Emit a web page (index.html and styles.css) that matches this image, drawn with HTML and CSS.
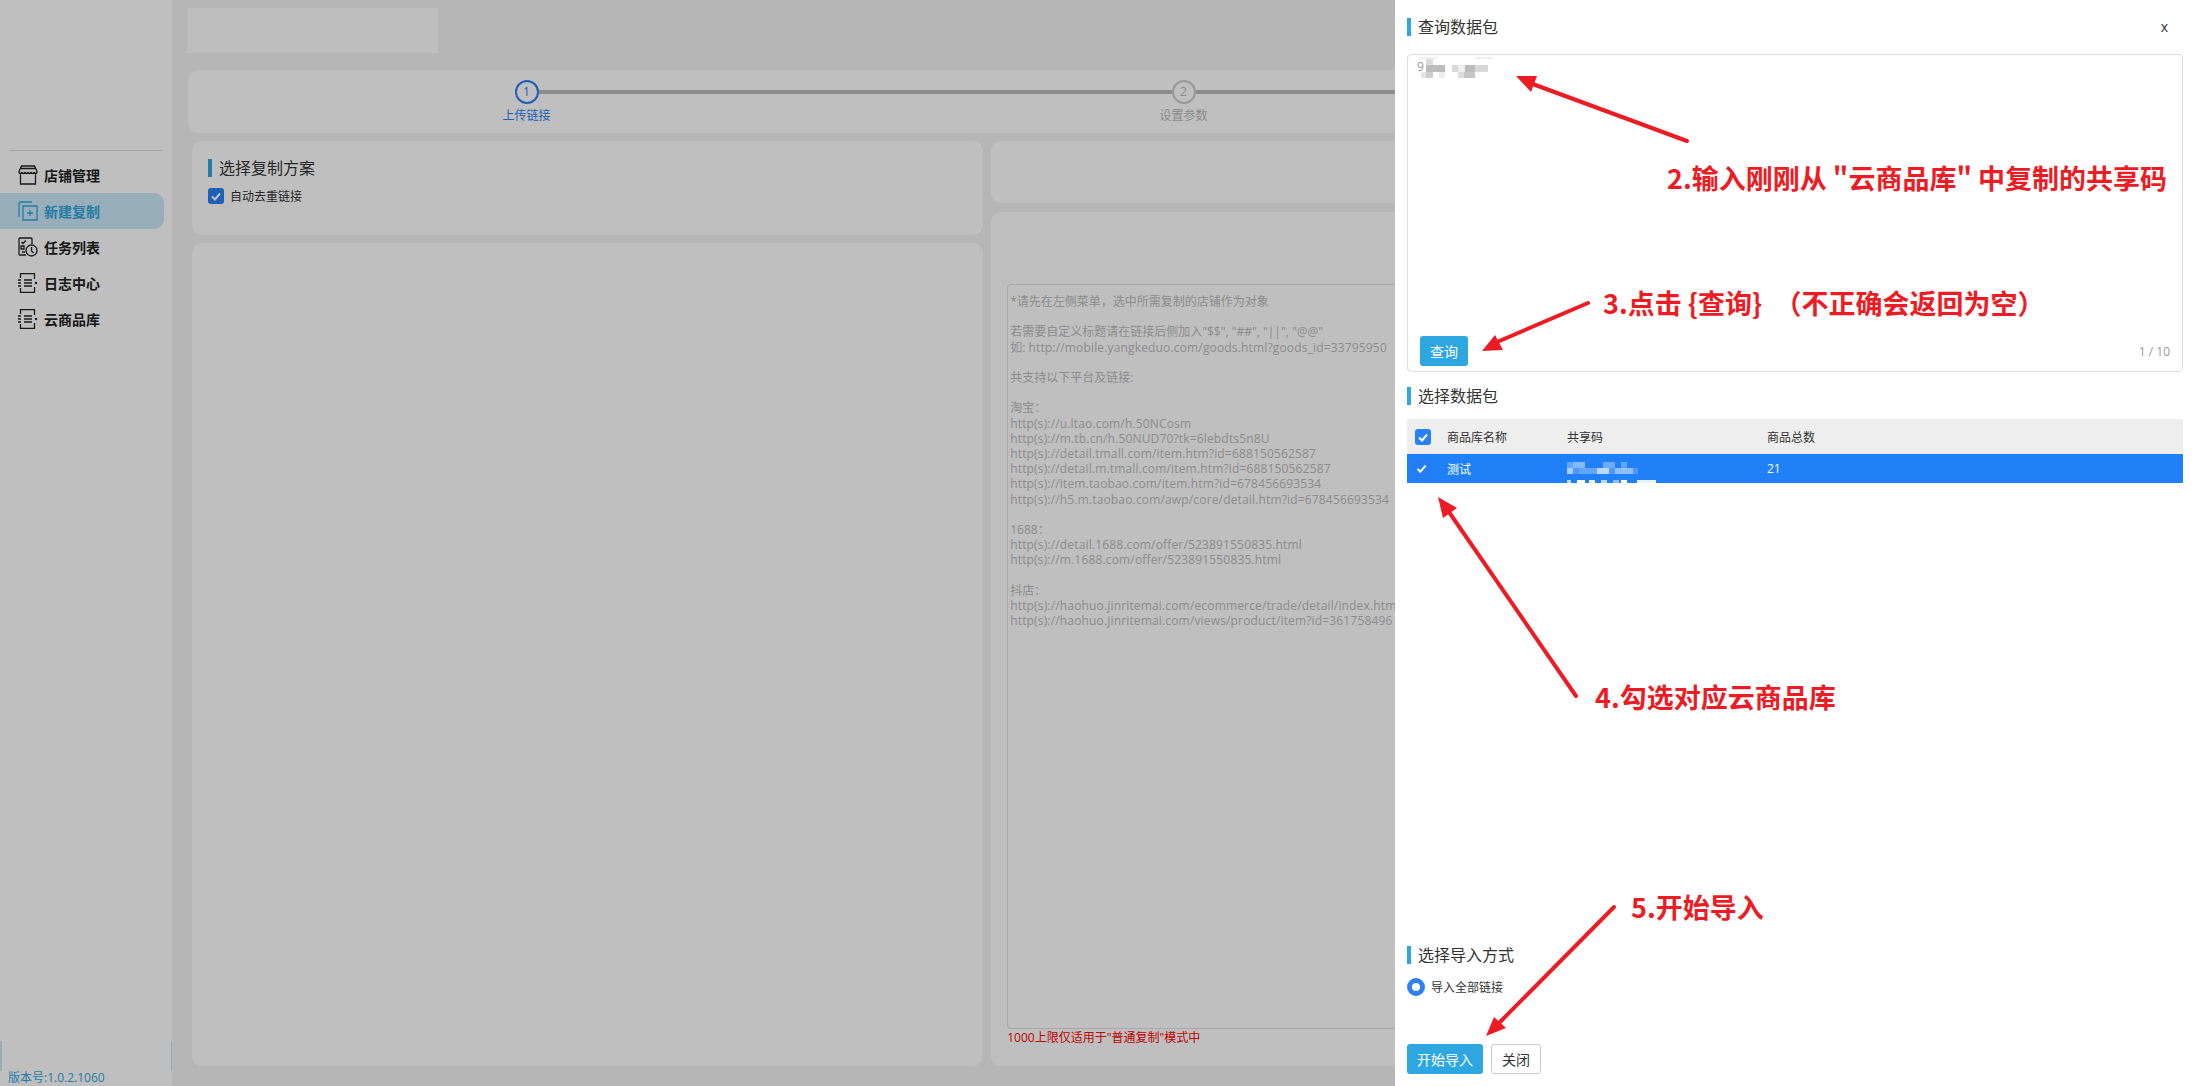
FILE: index.html
```html
<!DOCTYPE html>
<html lang="zh-CN">
<head>
  <meta charset="UTF-8" />
  <meta name="viewport" content="width=device-width, initial-scale=1" />
  <title>新建复制</title>
  <link rel="stylesheet" href="styles.css">
</head>
<body>

  <div class="app">
    <aside class="sidebar">
      <nav class="menu">
        <a class="menu-item">
          <svg class="menu-icon" viewBox="0 0 20 20"><path d="M3.500 1h13l2.500 5.500v1q-1.500 2-3 0-1.500 2-3 0-1.500 2-3 0-1.500 2-3 0-1.500 2-3 0-1.500 2-3 0v-1zM3 3.500h14M2.500 9.500v9.500h15V9.500"/></svg>
          店铺管理
        </a>
        <a class="menu-item active">
          <svg class="menu-icon" viewBox="0 0 20 20"><path d="M1 16V3q0-2 2-2h11M5 5h14v14H5zM12 9v6M9 12h6"/></svg>
          新建复制
        </a>
        <a class="menu-item">
          <svg class="menu-icon" viewBox="0 0 20 20"><path d="M8 18H2q-1 0-1-1V2q0-1 1-1h11q1 0 1 1v5M3.500 5l1.500 1.500L8 3.500M3 9h3v3H3zM4 15h3"/><circle cx="13.500" cy="13.500" r="5.500"/><path d="M13.500 10v4l2 2"/></svg>
          任务列表
        </a>
        <a class="menu-item">
          <svg class="menu-icon" viewBox="0 0 20 20"><path d="M2.500 5V.7h14V6M2.500 15v4.300h14V14M0 7h3M0 10h3M0 13h3M6 7h8M6 10h8M6 13h8"/><circle class="dot" cx="18" cy="10" r="1.200"/></svg>
          日志中心
        </a>
        <a class="menu-item">
          <svg class="menu-icon" viewBox="0 0 20 20"><path d="M2.500 5V.7h14V6M2.500 15v4.300h14V14M0 7h3M0 10h3M0 13h3M6 7h8M6 10h8M6 13h8"/><circle class="dot" cx="18" cy="10" r="1.200"/></svg>
          云商品库
        </a>
      </nav>
      <div class="version">版本号:1.0.2.1060</div>
    </aside>

    <main class="content">
      <div class="shop-box"></div>

      <div class="steps">
        <div class="step current">
          <span class="step-num">1</span>
          <span class="step-label">上传链接</span>
        </div>
        <div class="step">
          <span class="step-num">2</span>
          <span class="step-label">设置参数</span>
        </div>
        <div class="step last"></div>
      </div>

      <div class="columns">
        <div class="col">
          <section class="card plan-card">
            <h3 class="section-title">选择复制方案</h3>
            <label class="check-row">
              <span class="check dark">
                <svg viewBox="0 0 16 16"><path d="M4 8.500l3 3 5-6"/></svg>
              </span>
              自动去重链接
            </label>
          </section>
          <section class="card grow"></section>
        </div>
        <div class="col wide">
          <section class="card blank-card"></section>
          <section class="card grow link-card">
            <div class="link-input">*请先在左侧菜单，选中所需复制的店铺作为对象

若需要自定义标题请在链接后侧加入"$$", "##", "||", "@@"
如: <span class="url">http://mobile.yangkeduo.com/goods.html?goods_id=33795950</span>

共支持以下平台及链接:

淘宝：
<span class="url">http(s)://u.ltao.com/h.50NCosm
http(s)://m.tb.cn/h.50NUD70?tk=6lebdts5n8U
http(s)://detail.tmall.com/item.htm?id=688150562587
http(s)://detail.m.tmall.com/item.htm?id=688150562587
http(s)://item.taobao.com/item.htm?id=678456693534
http(s)://h5.m.taobao.com/awp/core/detail.htm?id=678456693534</span>

1688：
<span class="url">http(s)://detail.1688.com/offer/523891550835.html
http(s)://m.1688.com/offer/523891550835.html</span>

抖店：
<span class="url">http(s)://haohuo.jinritemai.com/ecommerce/trade/detail/index.htm
http(s)://haohuo.jinritemai.com/views/product/item?id=361758496</span></div>
            <div class="limit-note">1000上限仅适用于"普通复制"模式中</div>
          </section>
        </div>
      </div>
    </main>
  </div>

  <div class="mask"></div>

  <aside class="drawer">
    <div class="drawer-head">
      <h3 class="section-title">查询数据包</h3>
      <span class="drawer-close">x</span>
    </div>

    <div class="code-box">
      <div class="code-text">
        <span class="code-first">9</span>
        <svg class="code-blur" width="80" height="24" viewBox="0 0 80 24">
          <rect x="4" y="0" width="17" height="2" fill="#f0f0f0"/>
          <rect x="58" y="0" width="18" height="2" fill="#f0f0f0"/>
          <rect x="9" y="2" width="7" height="6" fill="#dcdcdc"/>
          <rect x="9" y="8" width="19" height="7" fill="#bcbcbc"/>
          <rect x="35" y="8" width="6" height="7" fill="#d8d8d8"/>
          <rect x="41" y="8" width="7" height="7" fill="#eeeeee"/>
          <rect x="48" y="8" width="10" height="7" fill="#bcbcbc"/>
          <rect x="58" y="8" width="13" height="7" fill="#d8d8d8"/>
          <rect x="4" y="15" width="5" height="6" fill="#e6e6e6"/>
          <rect x="9" y="15" width="7" height="6" fill="#cecece"/>
          <rect x="22" y="15" width="6" height="6" fill="#eeeeee"/>
          <rect x="41" y="15" width="6" height="6" fill="#dcdcdc"/>
          <rect x="47" y="15" width="11" height="6" fill="#c6c6c6"/>
        </svg>
      </div>
      <div class="code-foot">
        <button class="btn primary query-btn">查询</button>
        <span class="counter">1 / 10</span>
      </div>
    </div>

    <h3 class="section-title pack-title">选择数据包</h3>
    <table class="pack-table">
      <thead>
        <tr>
          <th class="cell-check">
            <span class="check head">
              <svg viewBox="0 0 16 16"><path d="M4 8.500l3 3 5-6"/></svg>
            </span>
          </th>
          <th class="cell-name">商品库名称</th>
          <th class="cell-code">共享码</th>
          <th>商品总数</th>
        </tr>
      </thead>
      <tbody>
        <tr class="selected">
          <td class="cell-check">
            <span class="check row">
              <svg viewBox="0 0 16 16"><path d="M3 8.500l3.500 3.500 6.500-7.500"/></svg>
            </span>
          </td>
          <td class="cell-name">测试</td>
          <td class="cell-code">
            <svg class="share-blur" width="90" height="21" viewBox="0 0 90 21">
              <g fill="#fff">
                <rect x="0" y="0" width="6" height="6" opacity=".3"/>
                <rect x="6" y="0" width="12" height="6" opacity=".45"/>
                <rect x="36" y="0" width="12" height="6" opacity=".35"/>
                <rect x="54" y="0" width="6" height="6" opacity=".3"/>
                <rect x="0" y="6" width="6" height="6" opacity=".6"/>
                <rect x="6" y="6" width="6" height="6" opacity=".2"/>
                <rect x="12" y="6" width="18" height="6" opacity=".3"/>
                <rect x="30" y="6" width="12" height="6" opacity=".7"/>
                <rect x="42" y="6" width="6" height="6" opacity=".2"/>
                <rect x="48" y="6" width="18" height="6" opacity=".5"/>
                <rect x="66" y="6" width="5" height="6" opacity=".2"/>
                <rect x="0" y="18" width="4" height="3" opacity=".7"/>
                <rect x="10" y="18" width="8" height="3"/>
                <rect x="22" y="18" width="6" height="3" opacity=".9"/>
                <rect x="34" y="18" width="6" height="3" opacity=".7"/>
                <rect x="46" y="18" width="6" height="3" opacity=".5"/>
                <rect x="54" y="18" width="6" height="3"/>
                <rect x="70" y="18" width="19" height="3" opacity=".9"/>
              </g>
            </svg>
          </td>
          <td>21</td>
        </tr>
      </tbody>
    </table>

    <div class="import-way">
      <h3 class="section-title">选择导入方式</h3>
      <label class="radio-row">
        <span class="radio"></span>
        导入全部链接
      </label>
    </div>

    <div class="drawer-foot">
      <button class="btn primary start-btn">开始导入</button>
      <button class="btn close-btn">关闭</button>
    </div>
  </aside>

  <!-- annotations drawn on top of the screenshot -->
  <svg class="arrows" width="2195" height="1086" viewBox="0 0 2195 1086">
    <g stroke="#ed1c24" stroke-width="4" stroke-linecap="round" fill="none">
      <path d="M1530 83L1687 141"/>
      <path d="M1497 342L1588 303"/>
      <path d="M1449 512L1576 696"/>
      <path d="M1500 1022L1614 907"/>
    </g>
    <g fill="#ed1c24">
      <path d="M1516 76L1537 76L1531 92z"/>
      <path d="M1482 351L1495 335L1503 350z"/>
      <path d="M1438 497L1457 508L1443 518z"/>
      <path d="M1486 1036L1494 1017L1506 1028z"/>
    </g>
  </svg>
  <div class="note note-2">2.输入刚刚从 "云商品库" 中复制的共享码</div>
  <div class="note note-3">3.点击 {查询}  （不正确会返回为空）</div>
  <div class="note note-4">4.勾选对应云商品库</div>
  <div class="note note-5">5.开始导入</div>

</body>
</html>
```

FILE: styles.css
```css
* {
  box-sizing: border-box;
}

html, body {
  margin: 0;
  height: 100%;
  overflow: hidden;
}

body {
  font-family: "Open Sans", "Noto Sans CJK SC", sans-serif;
  font-size: 12px;
  color: #333;
  background: #f3f3f5;
}

h3 {
  margin: 0;
  font-weight: normal;
}

.app {
  display: flex;
  height: 100vh;
}

/* sidebar */
.sidebar {
  position: relative;
  width: 172px;
  flex: none;
  display: flex;
  flex-direction: column;
  background: #fff;
  padding-top: 150px;
}

/* collapse handle, only its two edges show */
.sidebar::before,
.sidebar::after {
  content: "";
  position: absolute;
  top: 1041px;
  height: 30px;
  background: #cfe6f2;
}

.sidebar::before {
  left: 0;
  width: 2px;
}

.sidebar::after {
  right: 0;
  width: 1px;
}

.menu::before {
  content: "";
  display: block;
  height: 1px;
  margin: 0 10px 6px;
  background: #ddd;
}

.menu-item {
  display: flex;
  align-items: center;
  gap: 6px;
  width: 164px;
  height: 36px;
  padding-left: 18px;
  font-size: 14px;
  font-weight: bold;
  color: #222;
  border-radius: 0 10px 10px 0;
}

.menu-item.active {
  background: #cbe9f7;
  color: #2ea7e0;
}

.menu-icon {
  width: 20px;
  height: 20px;
  flex: none;
  fill: none;
  stroke: currentColor;
  stroke-width: 1.300;
}

.menu-icon .dot {
  fill: currentColor;
  stroke: none;
}

.version {
  margin-top: auto;
  padding: 0 0 0 8px;
  height: 16px;
  line-height: 16px;
  color: #2ea7e0;
}

/* main */
.content {
  flex: 1;
  min-width: 0;
  display: flex;
  flex-direction: column;
  padding: 8px 16px 20px;
}

.shop-box {
  width: 251px;
  height: 45px;
  margin-left: -1px;
  background: #fff;
  opacity: .9;
}

.steps {
  display: flex;
  height: 63px;
  margin-top: 17px;
  padding: 10px 10px 0;
  background: #fff;
  border-radius: 10px;
}

.step {
  position: relative;
  flex: 1;
  display: flex;
  flex-direction: column;
  align-items: center;
  color: #bbb;
}

.step::after {
  content: "";
  position: absolute;
  top: 10px;
  left: calc(50% + 12px);
  width: calc(100% - 24px);
  height: 4px;
  background: #bbb;
}

.step.last::after {
  display: none;
}

.step-num {
  width: 24px;
  height: 24px;
  line-height: 20px;
  text-align: center;
  border: 2px solid #ccc;
  border-radius: 50%;
}

.step-label {
  margin-top: 3px;
  line-height: 18px;
}

.step.current {
  color: #2a80f5;
}

.step.current .step-num {
  border-color: #2a80f5;
}

.columns {
  flex: 1;
  min-height: 0;
  display: grid;
  grid-template-columns: 1fr 1.5fr;
  gap: 8px;
  margin: 8px 1px 0 4px;
}

.col {
  display: flex;
  flex-direction: column;
  gap: 8px;
  min-width: 0;
}

.col.wide {
  gap: 9px;
}

.card {
  background: #fff;
  border-radius: 10px;
}

.grow {
  flex: 1;
  min-height: 0;
}

.plan-card {
  height: 94px;
  padding: 18px 16px;
}

.blank-card {
  height: 62px;
}

.section-title {
  height: 18px;
  line-height: 18px;
  padding-left: 7px;
  border-left: 4px solid #2ea7e0;
  font-size: 16px;
  color: #333;
}

.check-row {
  display: flex;
  align-items: center;
  gap: 6px;
  margin-top: 10px;
}

.check {
  display: block;
  width: 16px;
  height: 16px;
  flex: none;
  border-radius: 3px;
  background: #2a80f5;
}

.check svg {
  display: block;
  width: 100%;
  height: 100%;
  fill: none;
  stroke: #fff;
  stroke-width: 2;
}

.link-card {
  display: flex;
  flex-direction: column;
  padding: 72px 16px 19px;
}

.link-input {
  flex: 1;
  min-height: 0;
  padding: 9px 2px;
  border: 1px solid #e0e0e0;
  border-radius: 4px;
  line-height: 15.200px;
  color: #bbb;
  white-space: pre;
  overflow: hidden;
}

.url {
  letter-spacing: .16px;
}

.limit-note {
  height: 18px;
  line-height: 18px;
  color: #f00;
}

/* drawer and mask */
.mask {
  position: fixed;
  inset: 0;
  background: rgba(0, 0, 0, .25);
}

.drawer {
  position: fixed;
  top: 0;
  right: 0;
  bottom: 0;
  width: 800px;
  display: flex;
  flex-direction: column;
  padding: 18px 12px 12px;
  background: #fff;
}

.drawer-head {
  display: flex;
  justify-content: space-between;
  padding-right: 15px;
}

.drawer-close {
  line-height: 18px;
  font-size: 14px;
  color: #333;
}

.code-box {
  height: 318px;
  margin-top: 18px;
  display: flex;
  flex-direction: column;
  border: 1px solid #ddd;
  border-radius: 4px;
}

.code-text {
  position: relative;
  height: 24px;
  margin: 2px 0 0 9px;
  color: #999;
}

.code-first {
  position: absolute;
  top: 2px;
  left: 0;
  line-height: 16px;
}

.code-blur {
  position: absolute;
  top: 0;
  left: 0;
}

.code-foot {
  margin-top: auto;
  display: flex;
  align-items: center;
  justify-content: space-between;
  padding: 0 12px 5px;
}

.counter {
  color: #999;
}

.btn {
  height: 30px;
  padding: 0;
  font: inherit;
  font-size: 14px;
  border-radius: 3px;
  border: 1px solid #ccc;
  background: #fff;
  color: #333;
}

.btn.primary {
  border: none;
  background: #2ea7e0;
  color: #fff;
}

.query-btn {
  width: 48px;
}

.pack-title {
  margin-top: 15px;
}

.pack-table {
  width: 100%;
  margin-top: 14px;
  border-collapse: collapse;
  table-layout: fixed;
}

.pack-table th {
  height: 35px;
  padding: 0;
  background: #eee;
  font-weight: normal;
  text-align: left;
  color: #333;
}

.pack-table td {
  height: 29px;
  padding: 0;
}

.selected td {
  background: #2080f7;
  color: #fff;
}

.cell-check {
  width: 40px;
}

.cell-name {
  width: 120px;
}

.cell-code {
  width: 200px;
}

.check.head {
  margin-left: 8px;
}

.check.row {
  width: 15px;
  height: 15px;
  margin-left: 7px;
  background: transparent;
  border: 1px solid #3f6fe8;
}

.check.row svg {
  stroke-width: 2.400;
}

.share-blur {
  display: block;
  margin-top: 8px;
}

.import-way {
  margin-top: auto;
}

.radio-row {
  display: flex;
  align-items: center;
  gap: 6px;
  margin-top: 14px;
}

.radio {
  width: 18px;
  height: 18px;
  border: 5px solid #2f80f0;
  border-radius: 50%;
  background: #fff;
}

.drawer-foot {
  display: flex;
  gap: 8px;
  margin-top: 48px;
}

.start-btn {
  width: 76px;
}

.close-btn {
  width: 50px;
}

/* annotations */
.arrows {
  position: fixed;
  top: 0;
  left: 0;
  pointer-events: none;
}

.note {
  position: fixed;
  font-size: 27px;
  line-height: 36px;
  font-weight: bold;
  color: #ed1c24;
  white-space: pre;
  font-family: "Noto Sans CJK SC", sans-serif;
}

.note-2 {
  left: 1667px;
  top: 160px;
}

.note-3 {
  left: 1603px;
  top: 285px;
}

.note-4 {
  left: 1595px;
  top: 679px;
}

.note-5 {
  left: 1631px;
  top: 889px;
}
```
